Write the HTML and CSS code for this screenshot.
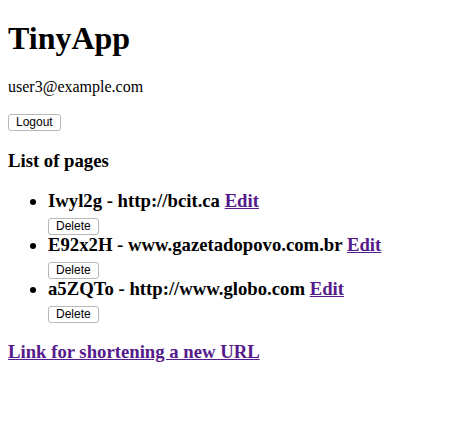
FILE: index.html
```html
<!DOCTYPE html>
<html>
<head>
<meta charset="utf-8">
<link rel="stylesheet" href="styles.css">
</head>
<body>
<h1 class="title">TinyApp</h1>
<p class="user">user3@example.com</p>
<form class="logout-form"><button type="button" class="btn">Logout</button></form>
<h3 class="section">List of pages</h3>
<ul class="pages">
  <li class="page">
    <span class="page-text">Iwyl2g - http://bcit.ca <a href="#" class="link">Edit</a></span>
    <form class="del-form"><button type="button" class="btn">Delete</button></form>
  </li>
  <li class="page">
    <span class="page-text">E92x2H - www.gazetadopovo.com.br <a href="#" class="link">Edit</a></span>
    <form class="del-form"><button type="button" class="btn">Delete</button></form>
  </li>
  <li class="page">
    <span class="page-text">a5ZQTo - http://www.globo.com <a href="#" class="link">Edit</a></span>
    <form class="del-form"><button type="button" class="btn">Delete</button></form>
  </li>
</ul>
<h3 class="section section-link"><a href="#" class="link">Link for shortening a new URL</a></h3>
</body>
</html>
```

FILE: styles.css
```css
body {
  margin: 8px;
  font-family: "Liberation Serif", "Times New Roman", serif;
  font-size: 16px;
  color: #000;
  background: #fff;
}
.title {
  font-size: 32px;
  font-weight: bold;
  margin: 12px 0 21px;
}
.user {
  margin: 16px 0 18px;
}
.logout-form {
  margin: 0;
  display: flex;
}
.btn {
  font-family: "Liberation Sans", Arial, sans-serif;
  font-size: 12px;
  height: 17px;
  padding: 0 7px;
  background: #fff;
  border: 1px solid #b8b8b8;
  border-radius: 3px;
  color: #000;
  line-height: 15px;
}
.section {
  font-size: 18.72px;
  font-weight: bold;
  margin: 18.72px 0;
}
.section-link {
  margin-top: 19px;
}
.pages {
  margin: 16px 0;
  padding-left: 40px;
}
.page {
  font-size: 18.72px;
  font-weight: bold;
}
.page-text {
  display: block;
}
.del-form {
  display: flex;
  margin: 6px 0 -1px 0;
}
.link {
  color: #551a8b;
  text-decoration: underline;
}
```
